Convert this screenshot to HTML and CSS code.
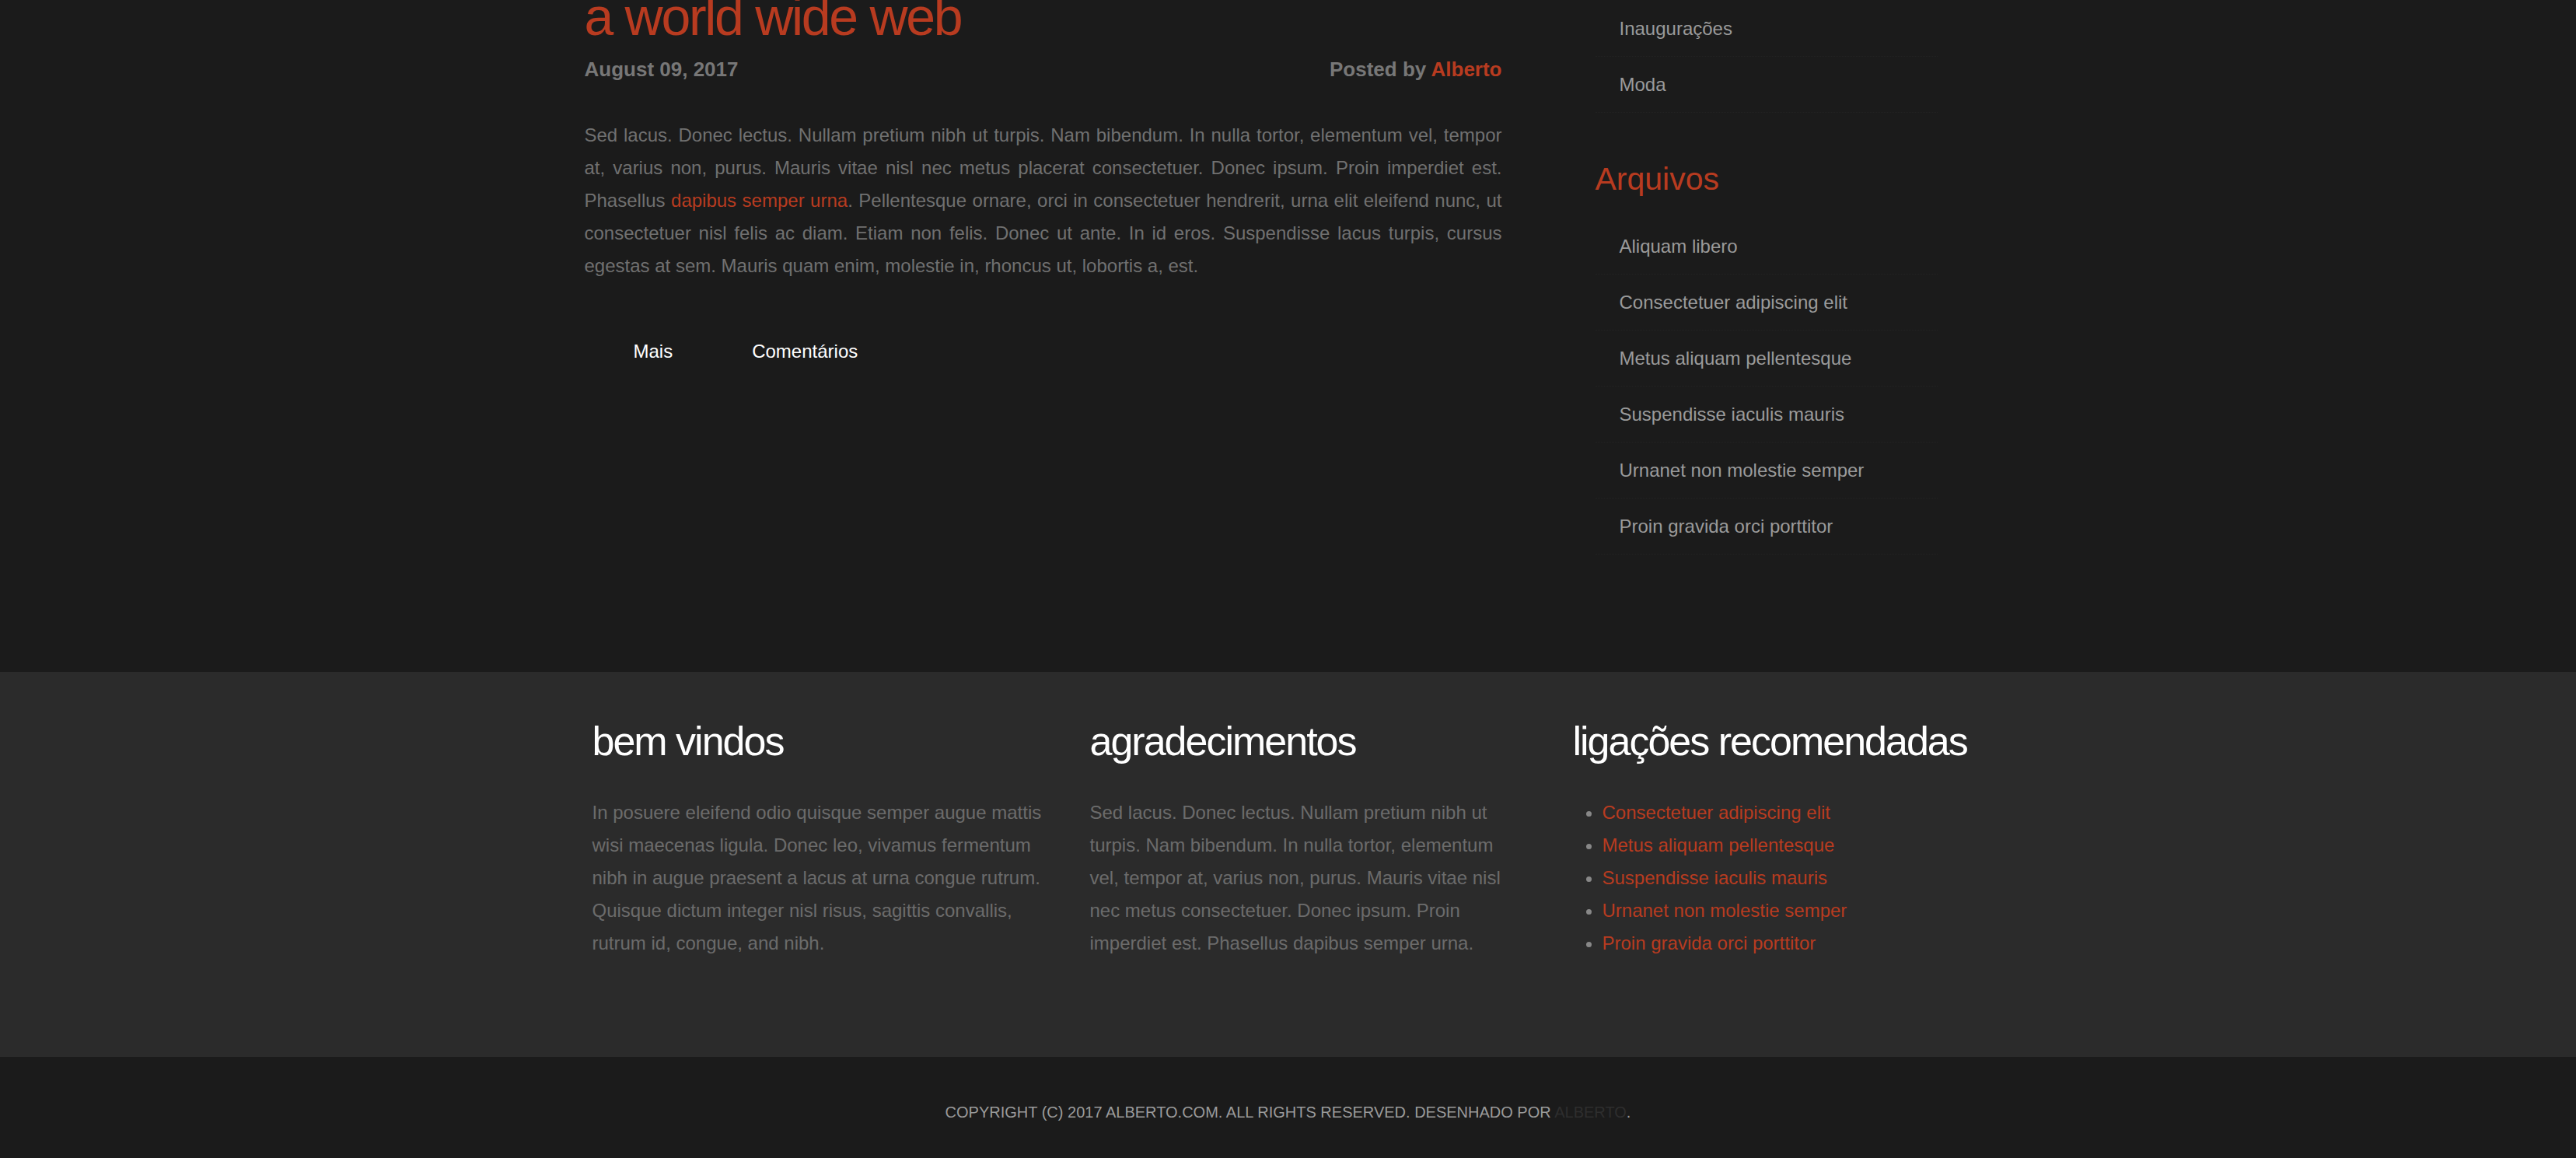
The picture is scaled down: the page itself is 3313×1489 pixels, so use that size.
FILE: index.html
```html
<!DOCTYPE html>
<html lang="pt">
<head>
<meta charset="utf-8">
<title>a world wide web</title>
<link rel="stylesheet" href="styles.css">
</head>
<body>
<div class="page">
  <div class="wrap">
    <main class="content">
      <div class="post">
        <h2 class="title"><a href="#">a world wide web</a></h2>
        <div class="meta">
          <span class="date">August 09, 2017</span>
          <span class="author">Posted by <a href="#">Alberto</a></span>
        </div>
        <div class="entry">
          <p>Sed lacus. Donec lectus. Nullam pretium nibh ut turpis. Nam bibendum. In nulla tortor, elementum vel, tempor at, varius non, purus. Mauris vitae nisl nec metus placerat consectetuer. Donec ipsum. Proin imperdiet est. Phasellus <a href="#">dapibus semper urna</a>. Pellentesque ornare, orci in consectetuer hendrerit, urna elit eleifend nunc, ut consectetuer nisl felis ac diam. Etiam non felis. Donec ut ante. In id eros. Suspendisse lacus turpis, cursus egestas at sem. Mauris quam enim, molestie in, rhoncus ut, lobortis a, est.</p>
        </div>
        <p class="links"><a class="more" href="#">Mais</a><a class="comments" href="#">Comentários</a></p>
      </div>
    </main>
    <aside class="sidebar">
      <ul class="side-list">
        <li><a href="#">Inaugurações</a></li>
        <li><a href="#">Moda</a></li>
      </ul>
      <h2 class="side-title">Arquivos</h2>
      <ul class="side-list">
        <li><a href="#">Aliquam libero</a></li>
        <li><a href="#">Consectetuer adipiscing elit</a></li>
        <li><a href="#">Metus aliquam pellentesque</a></li>
        <li><a href="#">Suspendisse iaculis mauris</a></li>
        <li><a href="#">Urnanet non molestie semper</a></li>
        <li><a href="#">Proin gravida orci porttitor</a></li>
      </ul>
    </aside>
  </div>
</div>
<div class="footer-widgets">
  <div class="fw-inner">
    <div class="fw-col fw-col-1">
      <h2 class="fw-title">bem vindos</h2>
      <p>In posuere eleifend odio quisque semper augue mattis wisi maecenas ligula. Donec leo, vivamus fermentum nibh in augue praesent a lacus at urna congue rutrum. Quisque dictum integer nisl risus, sagittis convallis, rutrum id, congue, and nibh.</p>
    </div>
    <div class="fw-col fw-col-2">
      <h2 class="fw-title">agradecimentos</h2>
      <p>Sed lacus. Donec lectus. Nullam pretium nibh ut turpis. Nam bibendum. In nulla tortor, elementum vel, tempor at, varius non, purus. Mauris vitae nisl nec metus consectetuer. Donec ipsum. Proin imperdiet est. Phasellus dapibus semper urna.</p>
    </div>
    <div class="fw-col fw-col-3">
      <h2 class="fw-title">ligações recomendadas</h2>
      <ul class="fw-list">
        <li><a href="#">Consectetuer adipiscing elit</a></li>
        <li><a href="#">Metus aliquam pellentesque</a></li>
        <li><a href="#">Suspendisse iaculis mauris</a></li>
        <li><a href="#">Urnanet non molestie semper</a></li>
        <li><a href="#">Proin gravida orci porttitor</a></li>
      </ul>
    </div>
  </div>
</div>
<div class="footer">
  <p>COPYRIGHT (C) 2017 ALBERTO.COM. ALL RIGHTS RESERVED. DESENHADO POR <a href="#">ALBERTO</a>.</p>
</div>
</body>
</html>
```

FILE: styles.css
```css
html, body {
  margin: 0;
  padding: 0;
}

body {
  background: #1b1b1b;
  font-family: "Liberation Sans", Arial, Helvetica, sans-serif;
  font-size: 24px;
  line-height: 42px;
  color: #707070;
  overflow: hidden;
}

a {
  text-decoration: none;
}

.page {
  padding-bottom: 151px;
}

.wrap {
  width: 1810px;
  margin: 0 auto;
  display: flex;
  align-items: flex-start;
}

.content {
  width: 1180px;
  margin-right: 120px;
  flex: none;
}

.title {
  margin: -20px 0 0;
  font-size: 68px;
  line-height: 82px;
  font-weight: normal;
  letter-spacing: -2.3px;
}

.title a {
  color: #b83b20;
}

.meta {
  margin-top: 9px;
  display: flex;
  justify-content: space-between;
  font-size: 26px;
  line-height: 36px;
  font-weight: bold;
  color: #777777;
}

.meta a {
  color: #b83b20;
}

.entry p {
  margin: 46px 0 0;
  text-align: justify;
}

.entry a {
  color: #b83b20;
}

.links {
  margin: 68px 0 0;
  display: flex;
}

.links a {
  color: #ffffff;
  padding-left: 63px;
}

.links .more {
  margin-right: 39px;
}

.sidebar {
  width: 440px;
  flex: none;
  padding-top: 1px;
}

.side-list {
  list-style: none;
  margin: 0;
  padding: 0;
}

.side-list li {
  padding: 15px 0 14px 31px;
  border-bottom: 1px dotted #222222;
}

.side-list a {
  color: #9a9a9a;
}

.side-title {
  margin: 61px 0 26px;
  font-size: 41px;
  line-height: 49px;
  font-weight: normal;
  color: #b83b20;
}

.footer-widgets {
  background: #2b2b2b;
  padding: 58px 0 125px;
}

.fw-inner {
  width: 1810px;
  margin: 0 auto;
  box-sizing: border-box;
  padding-left: 10px;
  display: grid;
  grid-template-columns: 640px 621px 1fr;
}

.fw-col-1 {
  padding-right: 44px;
}

.fw-col-2 {
  padding-right: 76px;
}

.fw-title {
  margin: 0 0 40px;
  font-size: 52px;
  line-height: 62px;
  font-weight: normal;
  letter-spacing: -2px;
  color: #ffffff;
}

.fw-col p {
  margin: 0;
  color: #6b6b6b;
}

.fw-list {
  margin: 0;
  padding-left: 38px;
  color: #888888;
}

.fw-list a {
  color: #b83b20;
}

.footer {
  background: #1b1b1b;
  padding: 56px 0 90px;
  text-align: center;
}

.footer p {
  margin: 0;
  font-size: 20px;
  line-height: 30px;
  color: #9a9a9a;
}

.footer a {
  color: #2e2e2e;
}
```
